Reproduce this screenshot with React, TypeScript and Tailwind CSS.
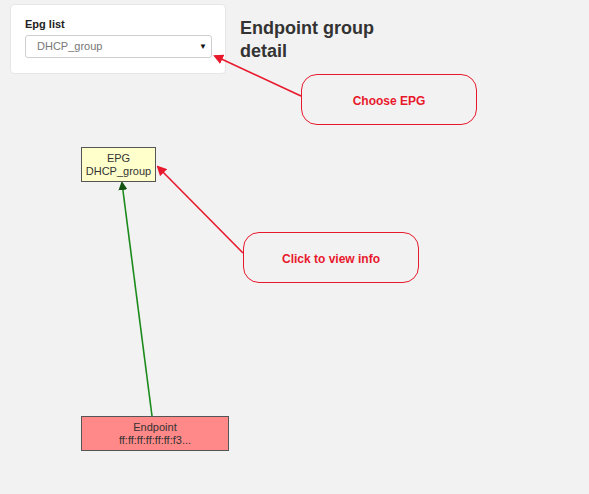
import React from "react";

export default function App() {
  return (
    <div className="relative w-[589px] h-[494px] overflow-hidden bg-[#f2f2f2] font-['Liberation_Sans',Arial,sans-serif] text-[#333]">
      <div className="flex items-start gap-[14px] pl-[10px] pt-[4px]">
        <div className="w-[216px] h-[70px] rounded-[4px] bg-white border border-[#e6e6e6] px-[14px] pt-[12px]">
          <div className="text-[11px] font-bold leading-[14px] text-[#222]">Epg list</div>
          <div className="mt-[4px] flex h-[23px] w-[187px] items-center justify-between rounded-[3px] border border-[#cfcfcf] bg-white pl-[11px] pr-[4px]">
            <span className="text-[11px] text-[#777]">DHCP_group</span>
            <span className="text-[8px] text-[#111]">▼</span>
          </div>
        </div>
        <h1 className="mt-[13px] text-[18px] font-bold leading-[23px] text-[#333]">
          Endpoint group
          <br />
          detail
        </h1>
      </div>

      <svg className="absolute left-0 top-0" width="589" height="494">
        <defs>
          <marker id="red" markerWidth="10" markerHeight="10" refX="8" refY="5" orient="auto" markerUnits="userSpaceOnUse">
            <path d="M0,0 L10,5 L0,10 z" fill="#e8192c" />
          </marker>
          <marker id="green" markerWidth="9" markerHeight="9" refX="7" refY="4.5" orient="auto" markerUnits="userSpaceOnUse">
            <path d="M0,0 L9,4.5 L0,9 z" fill="#145214" />
          </marker>
        </defs>
        <line x1="301" y1="96" x2="215" y2="56" stroke="#e8192c" strokeWidth="1.6" markerEnd="url(#red)" />
        <line x1="243" y1="253" x2="158" y2="167" stroke="#e8192c" strokeWidth="1.6" markerEnd="url(#red)" />
        <line x1="152" y1="416" x2="122" y2="183" stroke="#1c8a1c" strokeWidth="1.6" markerEnd="url(#green)" />
      </svg>

      <div className="absolute left-[301px] top-[74px] flex h-[51px] w-[176px] items-center justify-center rounded-[16px] border-[1.5px] border-[#e8192c] bg-[#f2f2f2] pt-[2px]">
        <span className="text-[12px] font-bold text-[#e8192c]">Choose EPG</span>
      </div>
      <div className="absolute left-[243px] top-[232px] flex h-[51px] w-[176px] items-center justify-center rounded-[16px] border-[1.5px] border-[#e8192c] bg-[#f2f2f2] pt-[2px]">
        <span className="text-[12px] font-bold text-[#e8192c]">Click to view info</span>
      </div>

      <div className="absolute left-[81px] top-[147px] flex h-[35px] w-[75px] flex-col items-center justify-center border-[1.5px] border-[#555] bg-[#ffffcc] text-[11px] leading-[13px] text-[#333]">
        <span>EPG</span>
        <span>DHCP_group</span>
      </div>
      <div className="absolute left-[81px] top-[416px] flex h-[35px] w-[148px] flex-col items-center justify-center border-[1.5px] border-[#555] bg-[#ff8888] text-[11px] leading-[13px] text-[#333]">
        <span>Endpoint</span>
        <span>ff:ff:ff:ff:ff:ff:f3...</span>
      </div>
    </div>
  );
}
